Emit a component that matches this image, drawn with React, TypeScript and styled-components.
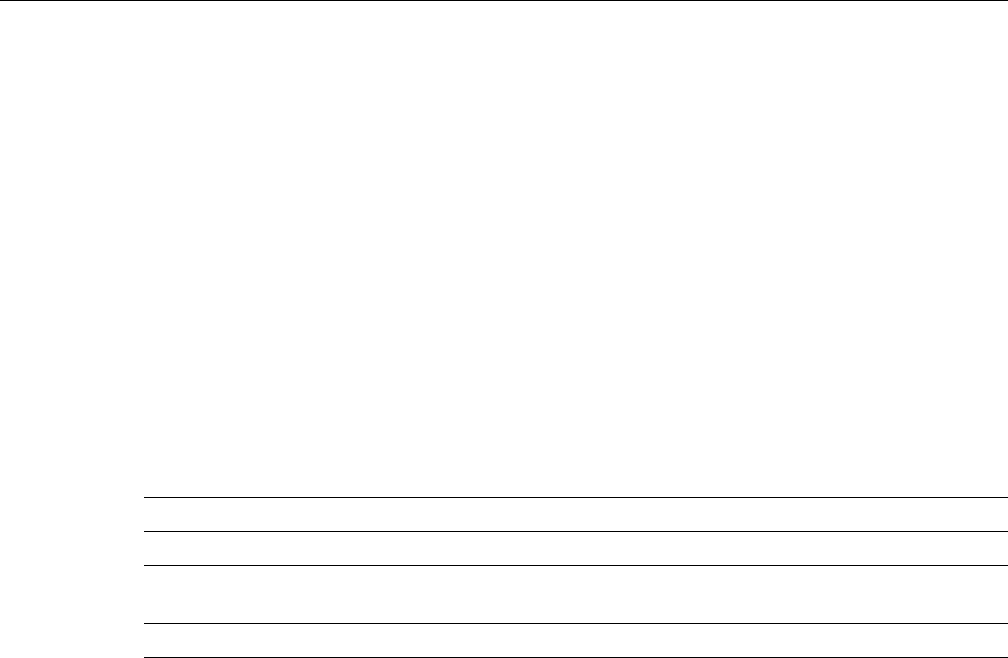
import React from 'react';
import styled, { createGlobalStyle } from 'styled-components';

const GlobalStyle = createGlobalStyle`
  html, body {
    margin: 0;
    padding: 0;
    background: #FFFFFF;
  }

  body {
    font-family: "Liberation Sans", Arial, sans-serif;
    color: #000000;
  }
`;

const Page = styled.div`
  display: flex;
  flex-direction: column;
  width: 1008px;
  height: 658px;
  overflow: hidden;
`;

const TopBar = styled.header`
  border-top: 1px solid #000000;
  height: 496px;
`;

const Table = styled.div`
  display: flex;
  flex-direction: column;
  margin-left: 144px;
  border-bottom: 1px solid #000000;
`;

const Row = styled.div<{ $height: number }>`
  display: grid;
  grid-template-columns: 1fr 1fr 1fr;
  height: ${props => props.$height}px;
  box-sizing: border-box;
  border-top: 1px solid #000000;
`;

const rows = [34, 34, 58, 34];

const App: React.FC = () => {
  return (
    <>
      <GlobalStyle />
      <Page>
        <TopBar />
        <Table>
          {rows.map((height, index) => (
            <Row key={index} $height={height} />
          ))}
        </Table>
      </Page>
    </>
  );
};

export default App;
